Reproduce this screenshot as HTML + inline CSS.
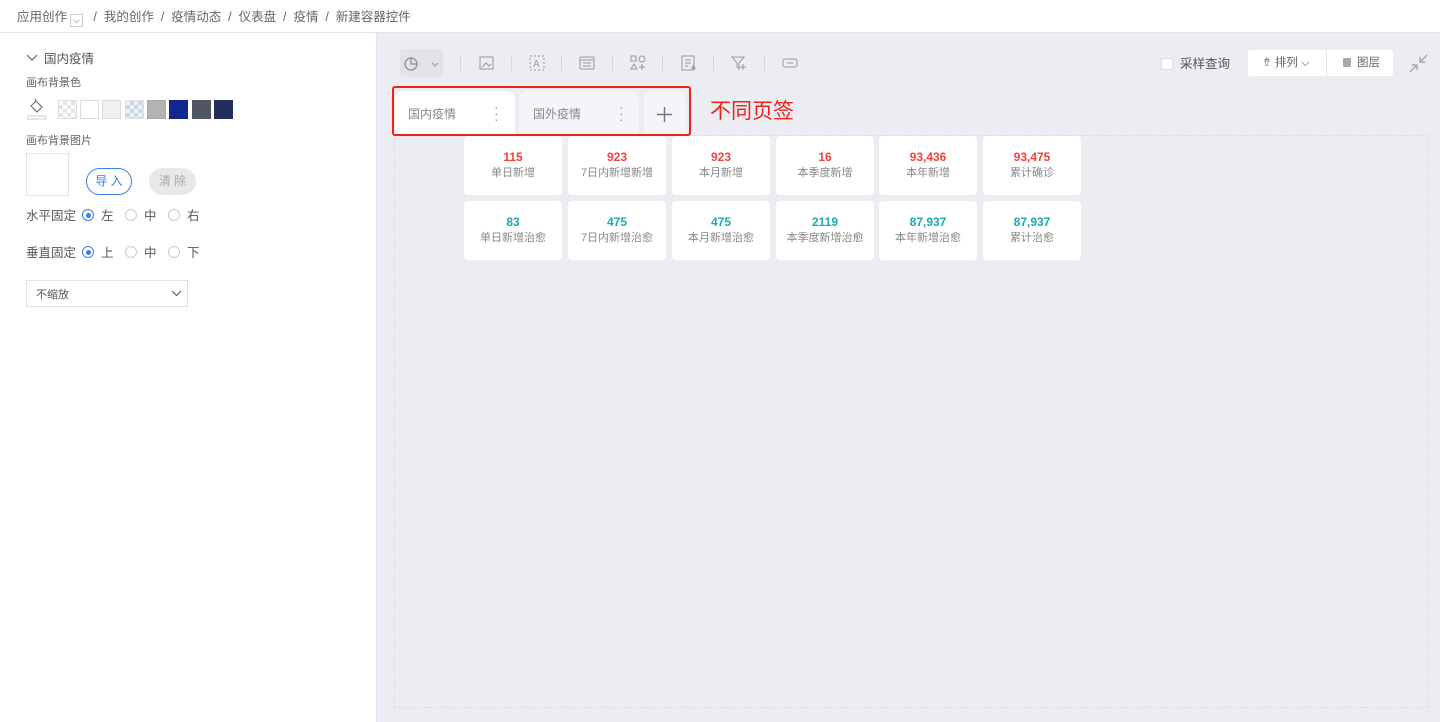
<!DOCTYPE html>
<html><head><meta charset="utf-8"><style>
*{box-sizing:border-box;margin:0;padding:0}
body{width:1440px;height:722px;overflow:hidden;font-family:"Liberation Sans","Noto Sans CJK SC",sans-serif;background:#ecedf2;position:relative;color:#555;line-height:1.2}
.top{position:absolute;left:0;top:0;width:1440px;height:33px;background:#fff;border-bottom:1px solid #e4e4e8;font-size:12.5px;color:#666;padding:10px 0 0 17px}
.top .dd{display:inline-block;width:13px;height:13px;border:1px solid #ccc;vertical-align:-2px;font-size:9px;text-align:center;line-height:11px;margin-left:3px}
.left{position:absolute;left:0;top:33px;width:377px;height:689px;background:#fff;border-right:1px solid #e4e4e8}
.abs{position:absolute}
.sw{position:absolute;top:100px;width:19px;height:19px;border:1px solid #ddd}
.chk{background:repeating-conic-gradient(#e6e6e6 0 25%,#fff 0 50%) 0 0/8px 8px}
.lbl{font-size:11px;color:#666}
.radio{position:absolute;width:12px;height:12px;border:1px solid #ccc;border-radius:50%}
.radio.on{border-color:#3a7cf2}
.radio.on:after{content:"";position:absolute;left:2.5px;top:2.5px;width:5px;height:5px;border-radius:50%;background:#3a7cf2}
.t13{font-size:12.5px;color:#555;position:absolute;line-height:15px}
.card{position:absolute;width:98px;height:59px;background:#fff;border-radius:4px;text-align:center}
.card b{display:block;font-size:12px;margin-top:14px;line-height:14px}
.card span{display:block;font-size:11px;color:#888;margin-top:3px}
.r b{color:#f0413c}.g b{color:#1aa8b1}
.sep{position:absolute;top:56px;width:1px;height:15px;background:#d5d6dc}
.ic{position:absolute;top:55px;width:16px;height:16px}
</style></head><body>
<div class="top">应用创作<span class="dd">⌵</span>&nbsp;&nbsp; / &nbsp;我的创作 &nbsp;/ &nbsp;疫情动态 &nbsp;/ &nbsp;仪表盘 &nbsp;/ &nbsp;疫情 &nbsp;/ &nbsp;新建容器控件</div>
<div class="left"></div>
<svg class="abs" style="left:26px;top:54px" width="12" height="8"><path d="M1 1l5 5 5-5" stroke="#666" fill="none" stroke-width="1.2"/></svg>
<div class="t13" style="left:44px;top:52px">国内疫情</div>
<div class="abs lbl" style="left:26px;top:77px">画布背景色</div>
<svg class="abs" style="left:27px;top:98px" width="20" height="22"><path d="M4 8l5-5 6 6-5 5z M9 3l-1-2" stroke="#666" fill="none"/><rect x="0" y="18" width="19" height="3" fill="#fff" stroke="#ccc"/></svg>
<div class="sw chk" style="left:58px"></div>
<div class="sw" style="left:80px;background:#fff"></div>
<div class="sw" style="left:102px;background:#eef0f3"></div>
<div class="sw chk" style="left:125px;background:repeating-conic-gradient(#cdd6e6 0 25%,#eef2f8 0 50%) 0 0/8px 8px"></div>
<div class="sw" style="left:147px;background:#b3b3b3;border-color:#aaa"></div>
<div class="sw" style="left:169px;background:#13258e;border:none"></div>
<div class="sw" style="left:192px;background:#4f5562;border:none"></div>
<div class="sw" style="left:214px;background:#222f5e;border:none"></div>
<div class="abs lbl" style="left:26px;top:135px">画布背景图片</div>
<div class="abs" style="left:26px;top:153px;width:43px;height:43px;border:1px solid #e2e2e2"></div>
<div class="abs" style="left:86px;top:168px;width:46px;height:27px;border:1px solid #3a7cf2;border-radius:14px;color:#3a7cf2;font-size:12px;text-align:center;line-height:25px">导 入</div>
<div class="abs" style="left:149px;top:168px;width:47px;height:27px;background:#e8e8e8;border-radius:14px;color:#aaa;font-size:12px;text-align:center;line-height:27px">清 除</div>
<div class="t13" style="left:26px;top:209px">水平固定</div>
<div class="radio on" style="left:82px;top:209px"></div><div class="t13" style="left:101px;top:209px">左</div>
<div class="radio" style="left:125px;top:209px"></div><div class="t13" style="left:144px;top:209px">中</div>
<div class="radio" style="left:168px;top:209px"></div><div class="t13" style="left:187px;top:209px">右</div>
<div class="t13" style="left:26px;top:246px">垂直固定</div>
<div class="radio on" style="left:82px;top:246px"></div><div class="t13" style="left:101px;top:246px">上</div>
<div class="radio" style="left:125px;top:246px"></div><div class="t13" style="left:144px;top:246px">中</div>
<div class="radio" style="left:168px;top:246px"></div><div class="t13" style="left:187px;top:246px">下</div>
<div class="abs" style="left:26px;top:280px;width:162px;height:27px;border:1px solid #e2e2e2;font-size:11px;color:#555;padding:8px 0 0 9px">不缩放</div>
<svg class="abs" style="left:171px;top:290px" width="11" height="7"><path d="M1 1l4.5 4.5L10 1" stroke="#555" fill="none"/></svg>

<div class="abs" style="left:400px;top:49px;width:43px;height:28px;background:#e2e3e8;border-radius:4px"></div>
<svg class="ic" style="left:404px;top:56px"><circle cx="7" cy="8" r="6" stroke="#999" fill="none" stroke-width="1.5"/><path d="M7 2v6h6" stroke="#999" fill="none" stroke-width="1.5"/></svg>
<svg class="abs" style="left:431px;top:62px" width="8" height="5"><path d="M1 1l3 3 3-3" stroke="#999" fill="none"/></svg>
<div class="sep" style="left:460px"></div>
<svg class="ic" style="left:479px"><rect x="1" y="2" width="13" height="12" stroke="#999" fill="none"/><path d="M3 12l4-4 3 3 2-2" stroke="#999" fill="none"/></svg>
<div class="sep" style="left:511px"></div>
<svg class="ic" style="left:529px"><rect x="1" y="1" width="14" height="14" stroke="#999" fill="none" stroke-dasharray="2 2"/><text x="4" y="12" font-size="10" fill="#999" font-family="Liberation Sans">A</text></svg>
<div class="sep" style="left:561px"></div>
<svg class="ic" style="left:579px"><rect x="1" y="2" width="14" height="12" rx="1" stroke="#999" fill="none"/><path d="M1 5h14M4 8h8M4 11h8" stroke="#999"/></svg>
<div class="sep" style="left:612px"></div>
<svg class="ic" style="left:630px"><rect x="1" y="1" width="5" height="5" stroke="#999" fill="none"/><circle cx="12" cy="4" r="3" stroke="#999" fill="none"/><path d="M1 14l3-5 3 5z M12 9v6M9 12h6" stroke="#999" fill="none"/></svg>
<div class="sep" style="left:662px"></div>
<svg class="ic" style="left:681px"><rect x="1" y="1" width="12" height="14" stroke="#999" fill="none"/><path d="M4 5h6M4 8h6M4 11h3M12 10v5M10 13h5" stroke="#999"/></svg>
<div class="sep" style="left:713px"></div>
<svg class="ic" style="left:731px"><path d="M1 2h12l-5 6v6l-2-2V8z M12 9v6M9 12h6" stroke="#999" fill="none"/></svg>
<div class="sep" style="left:764px"></div>
<svg class="ic" style="left:782px"><rect x="1" y="4" width="14" height="8" rx="2" stroke="#999" fill="none"/><path d="M5 8h6" stroke="#999"/></svg>

<div class="abs" style="left:1161px;top:58px;width:12px;height:12px;background:#fff;border:1px solid #ddd;border-radius:2px"></div>
<div class="t13" style="left:1180px;top:57px">采样查询</div>
<div class="abs" style="left:1248px;top:50px;width:145px;height:26px;background:#fff;border-radius:3px"></div>
<div class="abs" style="left:1326px;top:50px;width:1px;height:26px;background:#e8e8ec"></div>
<div class="abs" style="left:1262px;top:57px;font-size:11.5px;color:#666">⇮ 排列 ⌵</div>
<div class="abs" style="left:1343px;top:58px;width:8px;height:9px;background:#aaa;border-radius:1px"></div>
<div class="abs" style="left:1357px;top:57px;font-size:11.5px;color:#666">图层</div>
<svg class="abs" style="left:1409px;top:54px" width="19" height="19"><path d="M11 8l7-7M11 3v5h5M8 11l-7 7M3 11h5v5" stroke="#aaa" fill="none" stroke-width="1.5"/></svg>

<div class="abs" style="left:394px;top:135px;width:1034px;height:573px;border:1px dashed #dcdde3"></div>
<div class="abs" style="left:395px;top:91px;width:120px;height:44px;background:#fff;border-radius:8px 8px 0 0"></div>
<div class="abs" style="left:408px;top:107px;font-size:12px;color:#888">国内疫情</div>
<div class="abs" style="left:494px;top:104px;font-size:14px;color:#999;line-height:6px">·<br>·<br>·</div>
<div class="abs" style="left:519px;top:91px;width:120px;height:44px;background:#f4f5f8;border-radius:8px 8px 0 0"></div>
<div class="abs" style="left:533px;top:107px;font-size:12px;color:#888">国外疫情</div>
<div class="abs" style="left:619px;top:104px;font-size:14px;color:#999;line-height:6px">·<br>·<br>·</div>
<div class="abs" style="left:644px;top:91px;width:42px;height:44px;background:#f4f5f8;border-radius:8px 8px 0 0"></div>
<svg class="abs" style="left:657px;top:107px" width="15" height="15"><path d="M7.5 0v15M0 7.5h15" stroke="#777" stroke-width="1.4"/></svg>
<div class="abs" style="left:392px;top:86px;width:299px;height:50px;border:2.5px solid #f0211b;border-radius:3px"></div>
<div class="abs" style="left:710px;top:99px;font-size:21px;color:#f0211b">不同页签</div>

<div class="card r" style="left:464px;top:136px"><b>115</b><span>单日新增</span></div>
<div class="card r" style="left:568px;top:136px"><b>923</b><span>7日内新增新增</span></div>
<div class="card r" style="left:672px;top:136px"><b>923</b><span>本月新增</span></div>
<div class="card r" style="left:776px;top:136px"><b>16</b><span>本季度新增</span></div>
<div class="card r" style="left:879px;top:136px"><b>93,436</b><span>本年新增</span></div>
<div class="card r" style="left:983px;top:136px"><b>93,475</b><span>累计确诊</span></div>
<div class="card g" style="left:464px;top:201px"><b>83</b><span>单日新增治愈</span></div>
<div class="card g" style="left:568px;top:201px"><b>475</b><span>7日内新增治愈</span></div>
<div class="card g" style="left:672px;top:201px"><b>475</b><span>本月新增治愈</span></div>
<div class="card g" style="left:776px;top:201px"><b>2119</b><span>本季度新增治愈</span></div>
<div class="card g" style="left:879px;top:201px"><b>87,937</b><span>本年新增治愈</span></div>
<div class="card g" style="left:983px;top:201px"><b>87,937</b><span>累计治愈</span></div>
</body></html>
